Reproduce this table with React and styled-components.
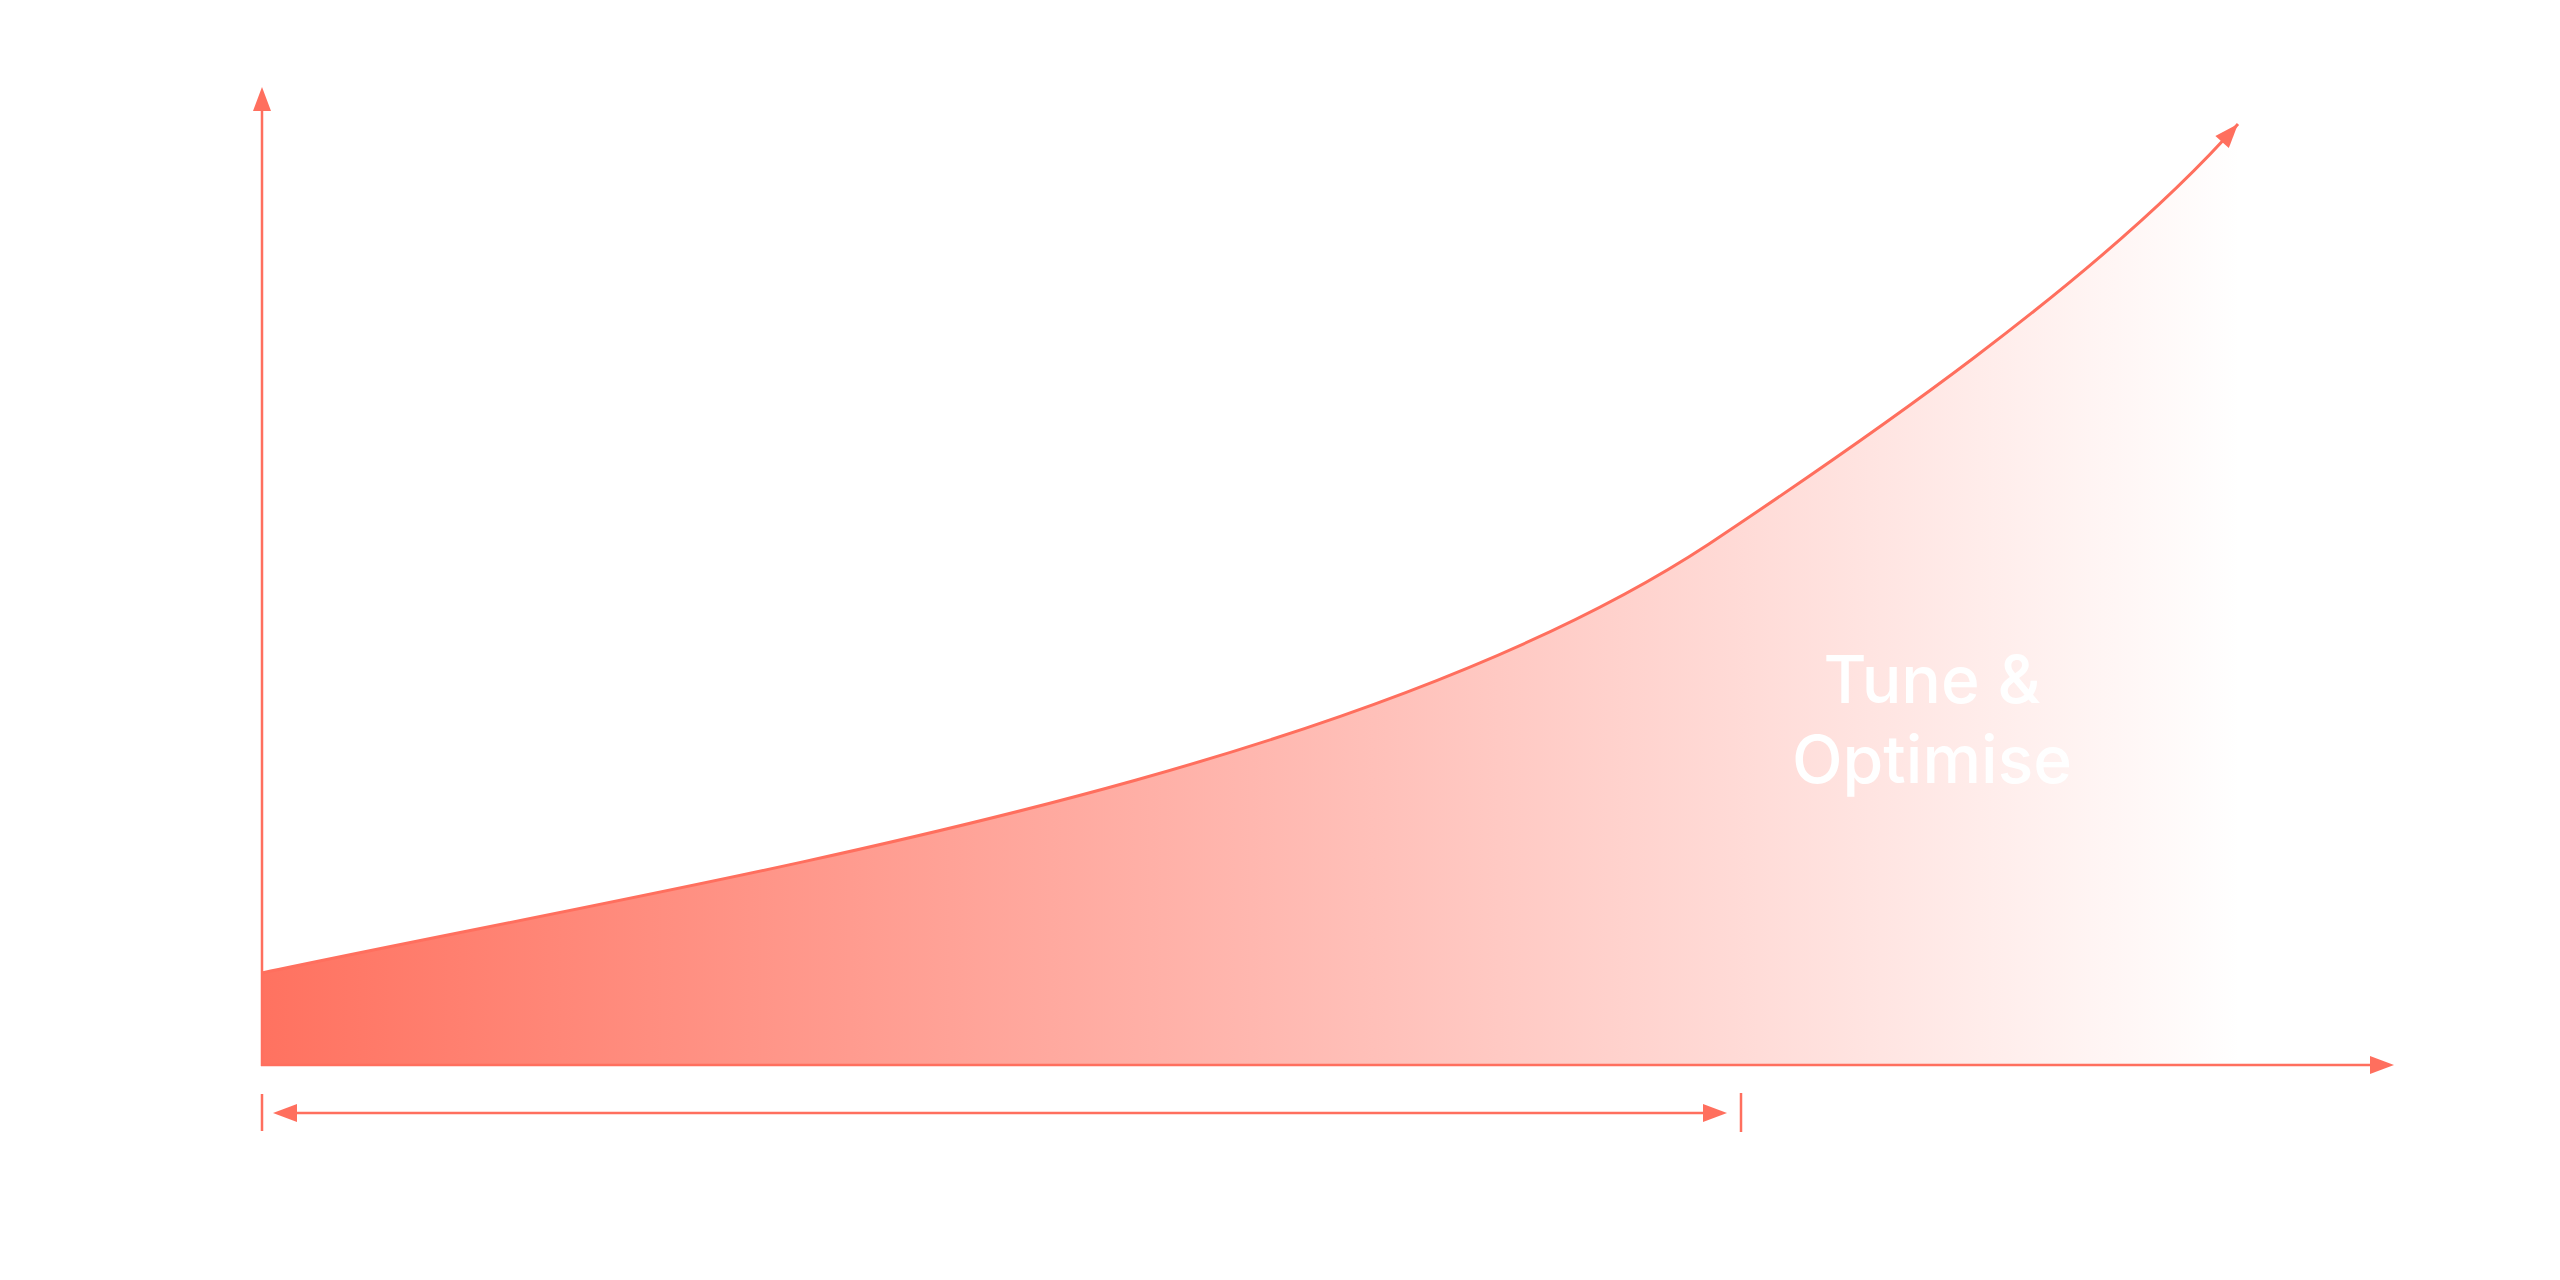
import React from 'react';
import styled, { createGlobalStyle } from 'styled-components';

const CORAL = '#FF6F5E';

const GlobalStyle = createGlobalStyle`
  html, body {
    margin: 0;
    padding: 0;
    background: #ffffff;
  }
  body {
    font-family: Inter, 'Noto Sans', 'Liberation Sans', sans-serif;
  }
`;

const Page = styled.main`
  display: flex;
  justify-content: center;
  width: 2560px;
  height: 1280px;
  overflow: hidden;
  background: #ffffff;
`;

const Figure = styled.div`
  position: relative;
  width: 2560px;
  height: 1280px;
`;

const Chart = styled.svg`
  display: block;
  width: 100%;
  height: 100%;
`;

// label sitting over the fading area of the curve
const Label = styled.p`
  position: absolute;
  left: ${(p) => p.$cx - 200}px;
  top: ${(p) => p.$top}px;
  width: 400px;
  margin: 0;
  font-family: Inter, 'Noto Sans', 'Liberation Sans', sans-serif;
  font-weight: 500;
  font-size: 66px;
  line-height: 80px;
  text-align: center;
  color: #ffffff;
`;

// growth curve: slow start, then a steep climb up to the arrow tip
const CURVE = 'M262 973 C700 880 1350 780 1709 544 C1850 450 2100 280 2238 124';

const Arrow = ({ tip, dir, len = 24, half = 9 }) => {
  const [tx, ty] = tip;
  const n = Math.hypot(dir[0], dir[1]);
  const ux = dir[0] / n;
  const uy = dir[1] / n;
  const bx = tx - ux * len;
  const by = ty - uy * len;
  const pts = [
    [tx, ty],
    [bx - uy * half, by + ux * half],
    [bx + uy * half, by - ux * half],
  ];
  return <polygon points={pts.map((p) => p.join(',')).join(' ')} fill={CORAL} />;
};

const Axes = () => (
  <g stroke={CORAL} strokeWidth="2.5" fill="none">
    {/* y axis */}
    <line x1="262" y1="104" x2="262" y2="1066" />
    {/* x axis */}
    <line x1="261" y1="1065" x2="2376" y2="1065" />
  </g>
);

const Span = () => (
  <g>
    <g stroke={CORAL} strokeWidth="2.5">
      <line x1="290" y1="1113" x2="1710" y2="1113" />
      <line x1="262" y1="1094" x2="262" y2="1131" />
      <line x1="1741" y1="1093" x2="1741" y2="1132" />
    </g>
    <Arrow tip={[273, 1113]} dir={[-1, 0]} />
    <Arrow tip={[1727, 1113]} dir={[1, 0]} />
  </g>
);

export default function App() {
  return (
    <>
      <GlobalStyle />
      <Page>
        <Figure>
          <Chart viewBox="0 0 2560 1280" xmlns="http://www.w3.org/2000/svg">
            <defs>
              <linearGradient id="fade" x1="262" y1="0" x2="2240" y2="0" gradientUnits="userSpaceOnUse">
                <stop offset="0" stopColor="#FF7260" />
                <stop offset="0.5" stopColor="#FFB7AF" />
                <stop offset="1" stopColor="#FFFFFF" />
              </linearGradient>
            </defs>

            <path d={`${CURVE} L2238 1066 L261 1066 Z`} fill="url(#fade)" />
            <path d={CURVE} stroke={CORAL} strokeWidth="3" fill="none" />
            <Arrow tip={[2238, 124]} dir={[138, -156]} />

            <Axes />
            <Arrow tip={[262, 87]} dir={[0, -1]} />
            <Arrow tip={[2394, 1065]} dir={[1, 0]} />

            <Span />
          </Chart>
          <Label $cx={1932} $top={639}>
            Tune &amp;
            <br />
            Optimise
          </Label>
        </Figure>
      </Page>
    </>
  );
}
